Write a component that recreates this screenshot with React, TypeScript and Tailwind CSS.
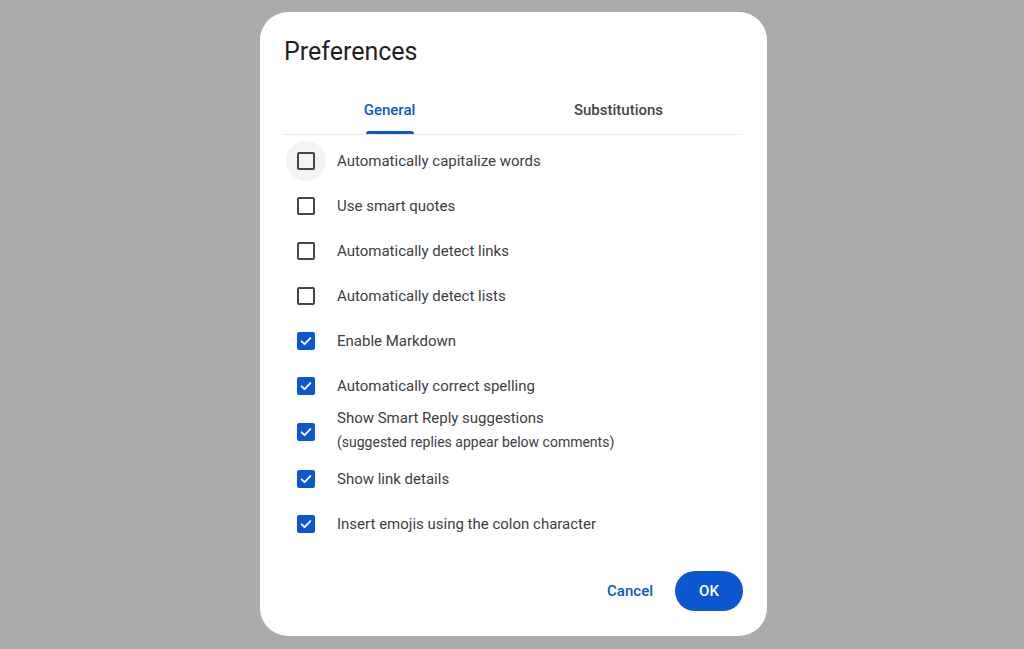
import { useState } from "react";

type Pref = { label: string; sub?: string; checked: boolean };

const prefs: Pref[] = [
  { label: "Automatically capitalize words", checked: false },
  { label: "Use smart quotes", checked: false },
  { label: "Automatically detect links", checked: false },
  { label: "Automatically detect lists", checked: false },
  { label: "Enable Markdown", checked: true },
  { label: "Automatically correct spelling", checked: true },
  {
    label: "Show Smart Reply suggestions",
    sub: "(suggested replies appear below comments)",
    checked: true,
  },
  { label: "Show link details", checked: true },
  { label: "Insert emojis using the colon character", checked: true },
];

function Checkbox({ checked, hover }: { checked: boolean; hover?: boolean }) {
  return (
    <div
      className={
        "w-10 h-10 rounded-full flex items-center justify-center shrink-0 " +
        (hover ? "bg-[#f3f3f3]" : "")
      }
    >
      {checked ? (
        <div className="w-[18px] h-[18px] rounded-[2px] bg-[#0b57d0] flex items-center justify-center">
          <svg width="14" height="14" viewBox="0 0 24 24" fill="none">
            <path
              d="M4.5 12.5l5 5 10-10.5"
              stroke="white"
              strokeWidth="3.2"
              strokeLinecap="round"
              strokeLinejoin="round"
            />
          </svg>
        </div>
      ) : (
        <div className="w-[18px] h-[18px] rounded-[2px] border-2 border-[#444746]" />
      )}
    </div>
  );
}

export default function App() {
  const [tab, setTab] = useState("general");
  return (
    <div
      className="bg-[#ababab] w-full h-screen flex items-start justify-center pt-3"
      style={{ fontFamily: "Roboto, 'Noto Sans', sans-serif" }}
    >
      <div className="bg-white w-[507px] h-[624px] rounded-[28px] pt-[24px] px-6 flex flex-col ml-[3px]">
        {/* title */}
        <h1 className="text-[25px] leading-8 text-[#1f1f1f]">Preferences</h1>

        {/* tabs */}
        <div className="mt-[18px] border-b border-[#e8eaed] -ml-px">
          <div className="flex -ml-[8px]">
            <button
              onClick={() => setTab("general")}
              className="w-[229px] h-[48px] flex flex-col items-center justify-center relative"
            >
              <span
                className={
                  "text-[15px] font-medium " +
                  (tab === "general" ? "text-[#0b57d0]" : "text-[#444746]")
                }
              >
                General
              </span>
              {tab === "general" && (
                <span className="absolute bottom-0 w-[48px] h-[3px] rounded-t-[3px] bg-[#0b57d0]" />
              )}
            </button>
            <button
              onClick={() => setTab("subs")}
              className="w-[229px] h-[48px] flex flex-col items-center justify-center relative"
            >
              <span
                className={
                  "text-[15px] font-medium " +
                  (tab === "subs" ? "text-[#0b57d0]" : "text-[#444746]")
                }
              >
                Substitutions
              </span>
              {tab === "subs" && (
                <span className="absolute bottom-0 w-[80px] h-[3px] rounded-t-[3px] bg-[#0b57d0]" />
              )}
            </button>
          </div>
        </div>

        {/* options */}
        <div className="flex flex-col mt-[3px]">
          {prefs.map((p, i) => (
            <div
              key={p.label}
              className={"flex items-center " + (p.sub ? "h-[48px]" : "h-[45px]")}
            >
              <div className="ml-[2px] mr-[11px]">
                <Checkbox checked={p.checked} hover={i === 0} />
              </div>
              <div className={"flex flex-col " + (p.sub ? "pb-[4px]" : "")}>
                <span className="text-[15px] text-[#3c4043] leading-5">{p.label}</span>
                {p.sub && (
                  <span className="text-[14px] text-[#3c4043] leading-5 mt-[4px]">{p.sub}</span>
                )}
              </div>
            </div>
          ))}
        </div>

        {/* actions */}
        <div className="mt-auto mb-[25px] flex items-center justify-end gap-[10px]">
          <button className="h-10 px-3 text-[15px] font-medium text-[#0b57d0] rounded-full">
            Cancel
          </button>
          <button className="h-10 w-[68px] text-[15px] font-medium text-white bg-[#0b57d0] rounded-full">
            OK
          </button>
        </div>
      </div>
    </div>
  );
}
